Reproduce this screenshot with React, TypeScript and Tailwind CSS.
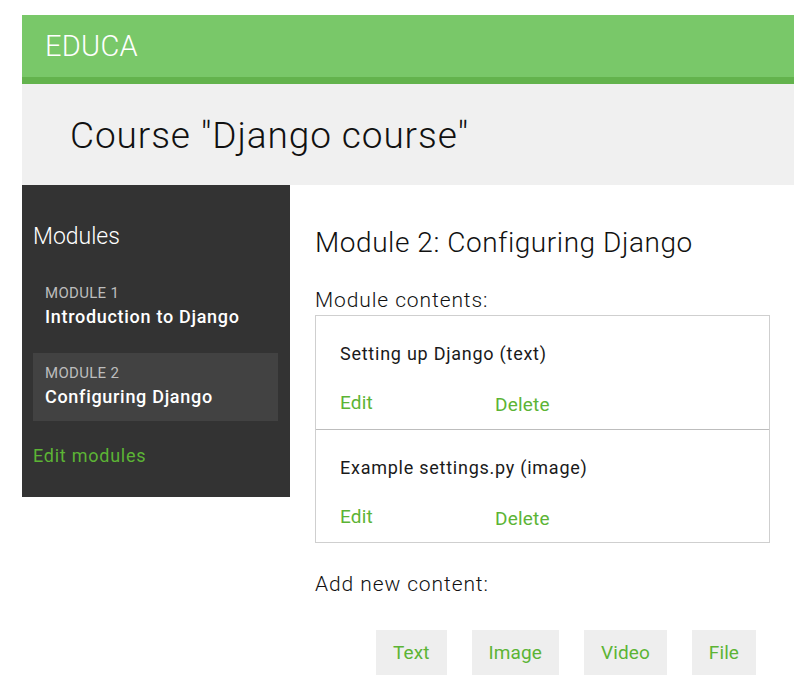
const modules = [
  { label: 'MODULE 1', title: 'Introduction to Django', active: false },
  { label: 'MODULE 2', title: 'Configuring Django', active: true },
];

const contents = ['Setting up Django (text)', 'Example settings.py (image)'];

const kinds = ['Text', 'Image', 'Video', 'File'];

export default function App() {
  return (
    <div
      className="min-h-[694px] w-[810px] bg-white pt-[15px] pl-[22px]"
      style={{ fontFamily: 'Roboto, "Noto Sans", sans-serif' }}
    >
      <div className="w-[772px]">
        <header className="h-[69px] bg-[#79c869] border-b-[7px] border-[#63b34d] flex items-center pl-[23px]">
          <span className="text-[29px] font-light text-white leading-none tracking-[0.3px]">EDUCA</span>
        </header>

        <div className="h-[101px] bg-[#f0f0f0] flex items-center pl-[48px] pt-[2px]">
          <h1 className="text-[37px] font-light text-[#111] leading-none tracking-[0.9px]">Course "Django course"</h1>
        </div>

        <div className="flex">
          <aside className="w-[268px] h-[312px] bg-[#333333] pl-[11px] pr-[12px] pt-[40px]">
            <h2 className="text-[23px] font-light text-white leading-none">Modules</h2>
            <ul className="mt-[25px] flex flex-col gap-[12px]">
              {modules.map((m) => (
                <li
                  key={m.label}
                  className={`h-[68px] pl-[12px] flex flex-col justify-center gap-[5px] ${m.active ? 'bg-[#424242]' : ''}`}
                >
                  <span className="text-[15px] text-[#bdbdbd] leading-none tracking-[0.3px]">{m.label}</span>
                  <span className="text-[18px] font-medium text-white leading-tight tracking-[0.7px]">{m.title}</span>
                </li>
              ))}
            </ul>
            <a className="block mt-[26px] text-[18px] text-[#5cb435] leading-none tracking-[0.75px]">Edit modules</a>
          </aside>

          <main className="flex-1 pl-[25px] pt-[44px]">
            <h2 className="text-[28px] font-light text-[#111] leading-none tracking-[0.55px]">Module 2: Configuring Django</h2>
            <p className="mt-[33px] text-[21px] font-light text-[#111] leading-none tracking-[0.9px]">Module contents:</p>
            <div className="mt-[4px] w-[455px] border border-[#cfcfcf]">
              {contents.map((c, i) => (
                <div
                  key={c}
                  className={`h-[113px] pl-[24px] pt-[29px] ${i > 0 ? 'border-t border-[#bdbdbd]' : ''}`}
                >
                  <p className="text-[18px] text-[#1a1a1a] leading-none tracking-[0.75px]">{c}</p>
                  <div className="mt-[30px] flex text-[19px] text-[#5cb435] leading-none tracking-[0.2px]">
                    <a className="w-[155px]">Edit</a>
                    <a className="pt-[2px]">Delete</a>
                  </div>
                </div>
              ))}
            </div>
            <p className="mt-[31px] text-[21px] font-light text-[#111] leading-none tracking-[0.9px]">Add new content:</p>
            <div className="mt-[35px] ml-[61px] flex gap-[25px]">
              {kinds.map((k) => (
                <button
                  key={k}
                  className="h-[45px] px-[17px] bg-[#eeeeee] text-[19px] text-[#5cb435] leading-none tracking-[0.1px]"
                >
                  {k}
                </button>
              ))}
            </div>
          </main>
        </div>
      </div>
    </div>
  );
}
